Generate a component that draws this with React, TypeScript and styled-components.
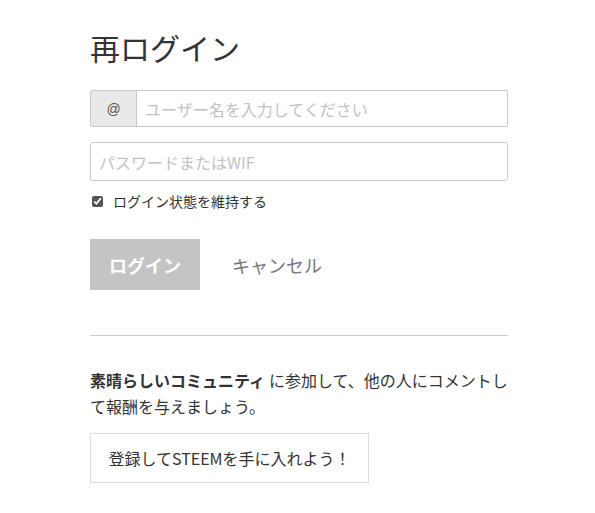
import React from "react";
import styled, { createGlobalStyle } from "styled-components";

const Global = createGlobalStyle`
  html, body { margin: 0; padding: 0; background: #fff; }
  body { font-family: "Noto Sans CJK JP", "Noto Sans", sans-serif; color: #333; }
  * { box-sizing: border-box; }
`;

const Page = styled.div`
  width: 595px;
  height: 513px;
  padding: 26px 0 0 90px;
`;

const Form = styled.div`
  width: 418px;
  display: flex;
  flex-direction: column;
`;

const Title = styled.h1`
  margin: 0 0 22px;
  font-size: 30px;
  font-weight: 400;
  line-height: 42px;
  color: #333;
`;

const InputGroup = styled.div`
  display: flex;
  height: 37px;
  border: 1px solid #cacaca;
  border-radius: 2px;
  margin-bottom: 15px;
  overflow: hidden;
`;

const Addon = styled.span`
  width: 46px;
  flex: none;
  display: flex;
  align-items: center;
  justify-content: center;
  background: #e9e9e9;
  border-right: 1px solid #cacaca;
  font-family: "Liberation Sans", sans-serif;
  font-size: 14px;
  color: #555;
`;

const Field = styled.input`
  flex: 1;
  min-width: 0;
  border: none;
  outline: none;
  padding: 0 8px;
  font-family: "Noto Sans CJK JP", sans-serif;
  font-size: 16px;
  color: #333;
  background: #fff;
  &::placeholder { color: #c2c2c2; }
`;

const PasswordField = styled(Field)`
  flex: none;
  width: 100%;
  height: 39px;
  border: 1px solid #cacaca;
  border-radius: 3px;
`;

const CheckRow = styled.label`
  display: flex;
  align-items: center;
  gap: 10px;
  margin-top: 12px;
  font-size: 14px;
  color: #333;
  height: 16px;
`;

const Check = styled.input`
  margin: 0 0 0 2px;
  width: 11px;
  height: 11px;
  accent-color: #555;
`;

const Actions = styled.div`
  display: flex;
  align-items: center;
  margin-top: 30px;
  gap: 32px;
`;

const LoginButton = styled.button`
  width: 110px;
  height: 51px;
  border: none;
  background: #c4c4c4;
  color: #fff;
  font-family: "Noto Sans CJK JP", sans-serif;
  font-weight: 700;
  font-size: 18px;
  padding: 0;
`;

const CancelLink = styled.span`
  font-size: 18px;
  color: #777;
`;

const Rule = styled.hr`
  margin: 45px 0 0;
  border: none;
  border-top: 1px solid #cacaca;
  height: 0;
`;

const Text = styled.p`
  margin: 31px 0 0;
  font-size: 16px;
  line-height: 26px;
  color: #333;
  strong { font-weight: 700; padding-right: 4px; }
`;

const SignUp = styled.button`
  align-self: flex-start;
  margin-top: 14px;
  height: 50px;
  width: 279px;
  border: 1px solid #dcdcdc;
  background: #fff;
  font-family: "Noto Sans CJK JP", sans-serif;
  font-size: 16px;
  color: #333;
  padding: 0;
`;

export default function App() {
  return (
    <Page>
      <Global />
      <Form>
        <Title>再ログイン</Title>
        <InputGroup>
          <Addon>@</Addon>
          <Field placeholder="ユーザー名を入力してください" />
        </InputGroup>
        <PasswordField type="password" placeholder="パスワードまたはWIF" />
        <CheckRow>
          <Check type="checkbox" defaultChecked />
          ログイン状態を維持する
        </CheckRow>
        <Actions>
          <LoginButton>ログイン</LoginButton>
          <CancelLink>キャンセル</CancelLink>
        </Actions>
        <Rule />
        <Text>
          <strong>素晴らしいコミュニティ</strong>に参加して、他の人にコメントして報酬を与えましょう。
        </Text>
        <SignUp>登録してSTEEMを手に入れよう！</SignUp>
      </Form>
    </Page>
  );
}
